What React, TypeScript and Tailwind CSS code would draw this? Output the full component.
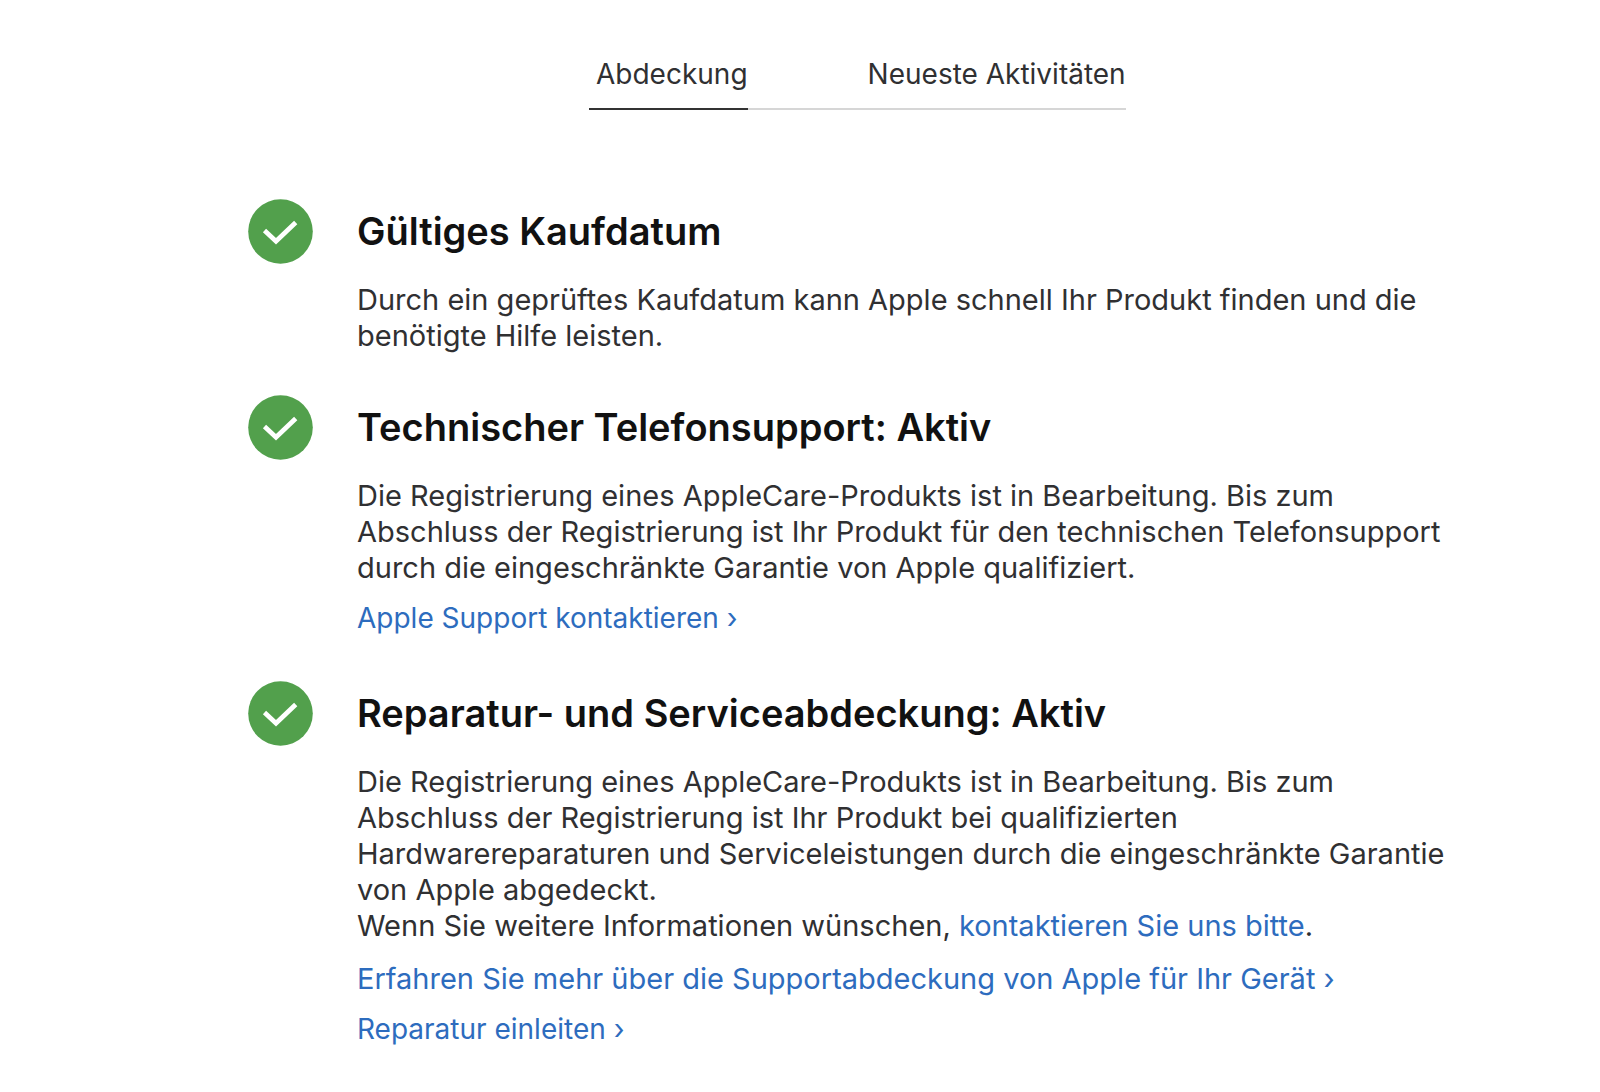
import type { ReactNode } from "react";

function Check() {
  return (
    <svg className="size-[65px] shrink-0" viewBox="0 0 65 65" aria-hidden="true">
      <circle cx="32.5" cy="32.5" r="32.3" fill="#52a04c" />
      <path d="M16.5 31.500 L28 42.200 L47.700 23.500" fill="none" stroke="#fff" strokeWidth="4.7" />
    </svg>
  );
}

function Section({ title, children }: { title: string; children: ReactNode }) {
  return (
    <section className="flex gap-11">
      <Check />
      <div className="min-w-0 flex-1">
        <h2 className="text-[38px] leading-[65px] font-semibold text-[#111]">{title}</h2>
        {children}
      </div>
    </section>
  );
}

function Text({ children }: { children: ReactNode }) {
  return <p className="mt-[18px] text-[29px] leading-9">{children}</p>;
}

function Link({ children }: { children: ReactNode }) {
  return (
    <a href="#" className="text-[#2d6cbe]">
      {children}
    </a>
  );
}

export default function App() {
  return (
    <main className="min-h-screen bg-white pt-14 pr-[140px] pb-10 pl-[248px] font-['Inter',sans-serif] text-[#303032]">
      <nav className="ml-[341px] flex w-fit text-[28px] leading-9">
        <button className="border-b-2 border-[#333] pb-4 pl-[7px]">Abdeckung</button>
        <button className="border-b-2 border-[#d6d6d6] pb-4 pl-[120px]">Neueste Aktivitäten</button>
      </nav>
      <div className="mt-[89px] flex flex-col gap-[41px]">
        <Section title="Gültiges Kaufdatum">
          <Text>
            Durch ein geprüftes Kaufdatum kann Apple schnell Ihr Produkt finden und die benötigte Hilfe leisten.
          </Text>
        </Section>
        <Section title="Technischer Telefonsupport: Aktiv">
          <Text>
            Die Registrierung eines AppleCare-Produkts ist in Bearbeitung. Bis zum Abschluss der Registrierung ist Ihr
            Produkt für den technischen Telefonsupport durch die eingeschränkte Garantie von Apple qualifiziert.
          </Text>
          <p className="mt-3.5 mb-1 text-[28px] leading-9">
            <Link>Apple Support kontaktieren ›</Link>
          </p>
        </Section>
        <Section title="Reparatur- und Serviceabdeckung: Aktiv">
          <Text>
            Die Registrierung eines AppleCare-Produkts ist in Bearbeitung. Bis zum Abschluss der Registrierung ist Ihr
            Produkt bei qualifizierten Hardwarereparaturen und Serviceleistungen durch die eingeschränkte Garantie von
            Apple abgedeckt.
            <br />
            Wenn Sie weitere Informationen wünschen, <Link>kontaktieren Sie uns bitte</Link>.
          </Text>
          <p className="mt-[17px] text-[29px] leading-9">
            <Link>Erfahren Sie mehr über die Supportabdeckung von Apple für Ihr Gerät ›</Link>
          </p>
          <p className="mt-3.5 text-[28px] leading-9">
            <Link>Reparatur einleiten ›</Link>
          </p>
        </Section>
      </div>
    </main>
  );
}
